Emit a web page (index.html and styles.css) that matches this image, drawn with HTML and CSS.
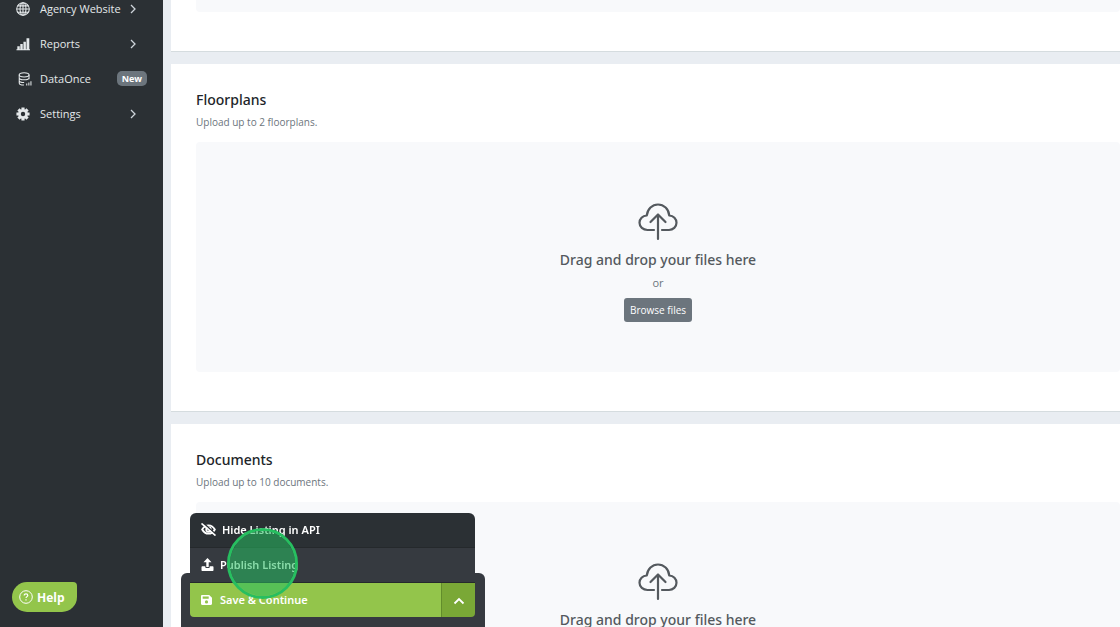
FILE: index.html
```html
<!DOCTYPE html>
<html lang="en">
  <head>
    <meta charset="UTF-8" />
    <meta name="viewport" content="width=device-width, initial-scale=1.0" />
    <title>Edit Listing</title>
    <link rel="stylesheet" href="styles.css">
  </head>
  <body>
    <nav class="sidebar">
      <a class="nav-item" href="#">
        <svg class="nav-icon" viewBox="0 0 16 16" fill="none" stroke="currentColor" stroke-width="1.2">
          <circle cx="8" cy="8" r="7.2" />
          <ellipse cx="8" cy="8" rx="3.4" ry="7.2" />
          <path d="M8 .8v14.4M.8 8h14.4M1.8 4.4h12.4M1.8 11.6h12.4" />
        </svg>
        <span>Agency Website</span>
        <svg class="chevron" viewBox="0 0 8 10"><path d="M2 1l4 4-4 4" /></svg>
      </a>
      <a class="nav-item" href="#">
        <svg class="nav-icon" viewBox="0 0 16 16" fill="currentColor">
          <path d="M1.500 10.500h2.800V14H1.500zM4.900 8h2.800v6H4.900zM8.500 5.500h2.800V14H8.500zM12 1.500h3.200V14H12zM.5 14h15.500v1.200H.5z" />
        </svg>
        <span>Reports</span>
        <svg class="chevron" viewBox="0 0 8 10"><path d="M2 1l4 4-4 4" /></svg>
      </a>
      <a class="nav-item" href="#">
        <svg class="nav-icon nav-icon-data" viewBox="0 0 16 16" fill="none" stroke="currentColor" stroke-width="1.2">
          <ellipse cx="7" cy="3.200" rx="5.600" ry="2.400" />
          <path d="M1.400 3.200v9.300c0 1.500 2.400 2.400 5.400 2.400M12.600 3.200v5M1.400 6.500c0 1.400 2.500 2.300 5.600 2.300s5.600-.9 5.600-2.300M1.400 9.600c0 1.400 2.500 2.300 5.600 2.300" />
          <path d="M10 15.500v-2.500M12.400 15.500v-3.500M14.800 15.500v-5" />
        </svg>
        <span>DataOnce</span>
        <span class="badge">New</span>
      </a>
      <a class="nav-item" href="#">
        <svg class="nav-icon" viewBox="0 0 16 16">
          <g stroke="currentColor" stroke-width="3.600">
            <path d="M8 .5v15M.5 8h15M2.800 2.800l10.400 10.400M13.200 2.800L2.800 13.200" />
          </g>
          <circle cx="8" cy="8" r="4" fill="none" stroke="currentColor" stroke-width="3" />
          <circle class="gear-hole" cx="8" cy="8" r="2.500" />
        </svg>
        <span>Settings</span>
        <svg class="chevron" viewBox="0 0 8 10"><path d="M2 1l4 4-4 4" /></svg>
      </a>
    </nav>

    <main class="content">
      <section class="card card-first">
        <div class="dropzone-end"></div>
      </section>

      <section class="card">
        <h2>Floorplans</h2>
        <p class="hint">Upload up to 2 floorplans.</p>
        <div class="dropzone">
          <svg class="cloud" viewBox="0 0 40 38">
            <path d="M16 27H9.500C5 27 1.500 23.800 1.500 19.800c0-3.800 3-7 7.300-7.300C9.500 6 14.200 1.500 20 1.500S30.800 6 31.200 12.500c4.300.2 7.300 3.400 7.300 7.300 0 4-3.400 7.200-7.500 7.200h-7M20 36V11.500M12.500 19l7.500-7.500 7.500 7.500" />
          </svg>
          <h3>Drag and drop your files here</h3>
          <span class="or">or</span>
          <button type="button" class="browse">Browse files</button>
        </div>
      </section>

      <section class="card">
        <h2>Documents</h2>
        <p class="hint">Upload up to 10 documents.</p>
        <div class="dropzone">
          <svg class="cloud" viewBox="0 0 40 38">
            <path d="M16 27H9.500C5 27 1.500 23.800 1.500 19.800c0-3.800 3-7 7.300-7.300C9.500 6 14.200 1.500 20 1.500S30.800 6 31.200 12.500c4.300.2 7.300 3.400 7.300 7.300 0 4-3.400 7.200-7.500 7.200h-7M20 36V11.500M12.500 19l7.500-7.500 7.500 7.500" />
          </svg>
          <h3>Drag and drop your files here</h3>
          <span class="or">or</span>
          <button type="button" class="browse">Browse files</button>
        </div>
      </section>
    </main>

    <div class="save-bar">
      <div class="save-group">
        <div class="save-menu">
          <button type="button" class="menu-item menu-item-dark">
            <svg class="eye" viewBox="0 0 16 14" fill="none" stroke="currentColor">
              <path d="M1.200 7C2.800 4 5.200 2.500 8 2.500S13.200 4 14.800 7c-1.600 3-4 4.500-6.800 4.500S2.800 10 1.200 7z" stroke-width="2" />
              <circle cx="8" cy="7" r="2.500" stroke-width="1.800" />
              <path class="eye-gap" d="M2.500 0l13.500 12.300" stroke-width="1.600" />
              <path d="M1 1l14 12" stroke-width="1.800" stroke-linecap="round" />
            </svg>
            Hide Listing in API
          </button>
          <button type="button" class="menu-item">
            <svg class="icon" viewBox="0 0 12 13" fill="currentColor">
              <path d="M6 0l4 4.200H7.200V9H4.800V4.200H2zM1 8.200h2.800v1c0 .5.400.8.800.8h2.800c.4 0 .8-.3.800-.8v-1H11c.6 0 1 .4 1 1V12c0 .6-.4 1-1 1H1c-.6 0-1-.4-1-1V9.200c0-.6.400-1 1-1z" />
            </svg>
            Publish Listing
          </button>
        </div>
        <button type="button" class="save">
          <svg class="disk" viewBox="0 0 11 12" fill="currentColor" fill-rule="evenodd">
            <path d="M1.200 1h7L11 3.800v6c0 .7-.5 1.200-1.200 1.200H1.200C.5 11 0 10.500 0 9.800V2.200C0 1.500.5 1 1.200 1zM1.700 2.500v2.300h6V2.500zM5.500 6.300a1.600 1.600 0 1 0 0 3.200 1.600 1.600 0 0 0 0-3.200z" />
          </svg>
          Save &amp; Continue
        </button>
        <button type="button" class="toggle" aria-label="More save options">
          <svg viewBox="0 0 12 8"><path d="M1.500 6.500L6 2l4.500 4.500" /></svg>
        </button>
      </div>
    </div>

    <div class="click-marker"></div>

    <button type="button" class="help">
      <svg viewBox="0 0 14 14" fill="none" stroke="currentColor">
        <circle cx="7" cy="7" r="6.300" />
        <path d="M5.200 5.500c0-1 .8-1.700 1.800-1.700s1.800.7 1.800 1.600c0 1.200-1.800 1.300-1.800 2.700M7 9.300v1.200" stroke-width="1.200" />
      </svg>
      Help
    </button>
  </body>
</html>
```
FILE: styles.css
```css
* {
  box-sizing: border-box;
}

body {
  margin: 0;
  display: flex;
  height: 100vh;
  overflow: hidden;
  background: #e9edf2;
  color: #212529;
  font-family: "Open Sans", "Noto Sans", sans-serif;
  font-size: 11px;
}

button {
  border: none;
  font-family: inherit;
  cursor: pointer;
}

/* sidebar */
.sidebar {
  width: 163px;
  flex-shrink: 0;
  background: #2b3034;
}

.nav-item {
  display: flex;
  align-items: center;
  height: 35px;
  padding: 0 16px;
  color: #e4e8ea;
  text-decoration: none;
}

.nav-item:first-child {
  margin-top: -9px;
}

.nav-icon {
  width: 14px;
  height: 14px;
  margin-right: 10px;
}

.nav-icon-data {
  margin-left: 2px;
  margin-right: 8px;
}

.gear-hole {
  fill: #2b3034;
}

.chevron {
  width: 8px;
  height: 10px;
  margin-left: auto;
  margin-right: 10px;
  fill: none;
  stroke: #ced4da;
  stroke-width: 1.3;
}

.badge {
  margin-left: auto;
  padding: 0 5px;
  border-radius: 5px;
  background: #6c757d;
  color: #fff;
  font-size: 9px;
  font-weight: 700;
  line-height: 15px;
}

/* upload sections */
.content {
  flex: 1;
  display: flex;
  flex-direction: column;
  gap: 12px;
  padding-left: 8px;
}

.card {
  flex-shrink: 0;
  padding: 25px 0 39px 25px;
  background: #fff;
  border-bottom: 1px solid #d5dcdf;
}

.card-first {
  padding-top: 0;
}

.dropzone-end {
  height: 12px;
  background: #f8f9fb;
  border-radius: 0 0 4px 4px;
}

h2,
h3 {
  font-family: "Noto Sans", sans-serif;
  font-size: 14px;
  font-weight: 500;
  line-height: 22px;
}

h2 {
  margin: 0;
}

.hint {
  margin: 2px 0 11px;
  color: #6c757d;
  font-size: 10px;
  line-height: 18px;
}

.dropzone {
  display: flex;
  flex-direction: column;
  align-items: center;
  height: 230px;
  padding-top: 61px;
  background: #f8f9fb;
  border-radius: 4px;
  color: #54595e;
}

.cloud {
  width: 40px;
  height: 38px;
  fill: none;
  stroke: #54595e;
  stroke-width: 2.2;
  stroke-linecap: round;
  stroke-linejoin: round;
}

h3 {
  margin: 8px 0 4px;
}

.or {
  color: #6c757d;
  line-height: 16px;
}

.browse {
  height: 24px;
  margin-top: 7px;
  padding: 0 6px;
  border-radius: 3px;
  background: #6c757d;
  color: #fff;
  font-size: 10px;
}

/* floating save bar */
.save-bar {
  position: fixed;
  left: 181px;
  bottom: 0;
  width: 304px;
  padding: 10px 10px 10px 9px;
  border-radius: 6px 6px 0 0;
  background: #363a40;
}

.save-group {
  position: relative;
  display: flex;
  height: 34px;
}

.save-menu {
  position: absolute;
  left: 0;
  right: 0;
  bottom: 100%;
  border-radius: 6px 6px 0 0;
  overflow: hidden;
}

.menu-item,
.save {
  display: flex;
  align-items: center;
  gap: 8px;
  width: 100%;
  height: 35px;
  padding: 0 11px 1px;
  background: #363a40;
  color: #fff;
  font-family: "Noto Sans", sans-serif;
  font-size: 11px;
  font-weight: 600;
}

.menu-item {
  gap: 6px;
  border-bottom: 1px solid #25292c;
}

.menu-item-dark {
  background: #2b3034;
}

.eye {
  width: 15px;
  height: 13px;
}

.eye-gap {
  stroke: #2b3034;
}

.icon {
  width: 13px;
  height: 13px;
}

.disk {
  width: 11px;
  height: 12px;
}

.save {
  flex: 1;
  height: 34px;
  border-radius: 0 0 0 4px;
  background: #93c54b;
}

.toggle {
  width: 34px;
  padding: 0;
  border-left: 1px solid #628d2b;
  border-radius: 0 0 4px 0;
  background: #7aa836;
}

.toggle svg {
  width: 12px;
  height: 8px;
  fill: none;
  stroke: #fff;
  stroke-width: 1.8;
}

.click-marker {
  position: fixed;
  left: 227px;
  bottom: 28px;
  width: 71px;
  height: 71px;
  border: 3px solid #27be60;
  border-radius: 50%;
  background: rgba(39, 190, 96, 0.55);
  background-clip: padding-box;
  pointer-events: none;
}

.help {
  position: fixed;
  left: 12px;
  bottom: 15px;
  display: flex;
  align-items: center;
  gap: 4px;
  height: 30px;
  padding: 0 12px 0 7px;
  border-radius: 15px 4px 15px 15px;
  background: #93c54b;
  color: #fff;
  font-size: 12px;
  font-weight: 700;
}

.help svg {
  width: 14px;
  height: 14px;
}
```
